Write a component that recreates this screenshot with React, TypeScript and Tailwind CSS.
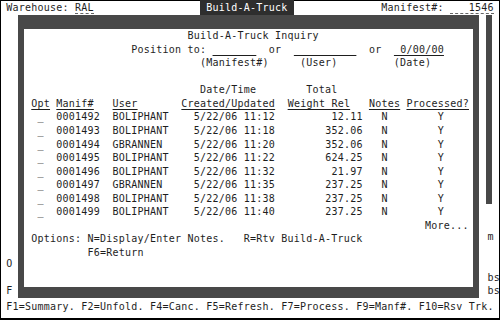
import React from "react";

type Seg = [number, string, string?];

const UL = "underline decoration-1 underline-offset-[2px]";

function Line({ segs = [], base = 0 }: { segs?: Seg[]; base?: number }) {
  let cur = base;
  const out: React.ReactNode[] = [];
  segs.forEach(([c, t, cls], i) => {
    if (c > cur) out.push(<span key={"s" + i}>{" ".repeat(c - cur)}</span>);
    out.push(
      <span key={i} className={cls}>
        {t}
      </span>
    );
    cur = c + t.length;
  });
  return <div className="h-[13.57px] leading-[13.57px] whitespace-pre">{out}</div>;
}

const rows: [string, string, string, string][] = [
  ["0001492", "BOLIPHANT", "5/22/06 11:12", "12.11"],
  ["0001493", "BOLIPHANT", "5/22/06 11:18", "352.06"],
  ["0001494", "GBRANNEN", "5/22/06 11:20", "352.06"],
  ["0001495", "BOLIPHANT", "5/22/06 11:22", "624.25"],
  ["0001496", "BOLIPHANT", "5/22/06 11:32", "21.97"],
  ["0001497", "GBRANNEN", "5/22/06 11:35", "237.25"],
  ["0001498", "BOLIPHANT", "5/22/06 11:38", "237.25"],
  ["0001499", "BOLIPHANT", "5/22/06 11:40", "237.25"],
];

export default function App() {
  const inner: Seg[][] = [
    [[30, "Build-A-Truck Inquiry"]],
    [
      [21, "Position to:"],
      [34, "       ", UL],
      [43, "or"],
      [47, "          ", UL],
      [59, "or"],
      [63, " 0/00/00", UL],
    ],
    [
      [32, "(Manifest#)"],
      [48, "(User)"],
      [63, "(Date)"],
    ],
    [],
    [
      [32, "Date/Time"],
      [49, "Total"],
    ],
    [
      [5, "Opt", UL],
      [9, "Manif#", UL],
      [18, "User", UL],
      [29, "Created/Updated", UL],
      [46, "Weight Rel", UL],
      [59, "Notes", UL],
      [65, "Processed?", UL],
    ],
    ...rows.map(
      ([id, user, dt, wt]) =>
        [
          [6, "_"],
          [9, id],
          [18, user],
          [31, dt],
          [58 - wt.length, wt],
          [61, "N"],
          [70, "Y"],
        ] as Seg[]
    ),
    [[68, "More..."]],
    [
      [5, "Options: N=Display/Enter Notes."],
      [39, "R=Rtv Build-A-Truck"],
    ],
    [[14, "F6=Return"]],
    [],
    [],
  ];

  const left: Seg[][] = Array.from({ length: 21 }, () => []);
  left[18] = [[1, "O"]];
  left[20] = [[1, "F"]];

  const right: Seg[][] = [[], [], [[78, "m"]], [], [], [[78, "bs"]], [[78, "bs"]]];

  return (
    <div
      className="w-[500px] h-[320px] bg-white text-[#1e1e1e] overflow-hidden tracking-[0.23px] shadow-[inset_1px_0_0_#000,inset_-1px_0_0_#000,inset_0_-2px_0_#000,inset_0_1px_0_#000]"
      style={{ fontFamily: '"DejaVu Sans Mono", "Liberation Mono", monospace', fontSize: "10px" }}
    >
      {/* header row */}
      <div className="flex h-[15px] items-stretch whitespace-pre leading-[15px]">
        <span>{" Warehouse: "}</span>
        <span className="h-[14px] leading-[15px] border-b border-dashed border-[#666]">RAL</span>
        <span>{" ".repeat(17)}</span>
        <span className="bg-[#2e2e2e] text-white">{" Build-A-Truck "}</span>
        <span>{" ".repeat(14)}</span>
        <span>Manifest#:</span>
        <span>{" "}</span>
        <span className="h-[14px] leading-[15px] border-b border-dashed border-[#666]">{"   1546"}</span>
      </div>

      {/* middle */}
      <div className="flex h-[283px]">
        <div className="w-[18px] flex flex-col">
          {left.map((s, i) => (
            <Line key={i} segs={s} />
          ))}
        </div>
        <div className="w-[461px] bg-[#484848] pt-[14px] px-[6px] pb-[11px] flex">
          <div className="flex-1 bg-white pl-[1px] flex flex-col">
            {inner.map((s, i) => (
              <Line key={i} segs={s} base={4} />
            ))}
          </div>
        </div>
        <div className="w-[21px] flex flex-col pl-[2.25px]">
          <div className="ml-[4.75px] w-[6px] h-[190px] bg-[#484848]" />
          {right.map((s, i) => (
            <Line key={i} segs={s} base={77} />
          ))}
        </div>
      </div>

      {/* footer */}
      <div className="mt-[2px]">
        <Line segs={[[1, "F1=Summary. F2=Unfold. F4=Canc. F5=Refresh. F7=Process. F9=Manf#. F10=Rsv Trk."]]} />
      </div>
    </div>
  );
}
